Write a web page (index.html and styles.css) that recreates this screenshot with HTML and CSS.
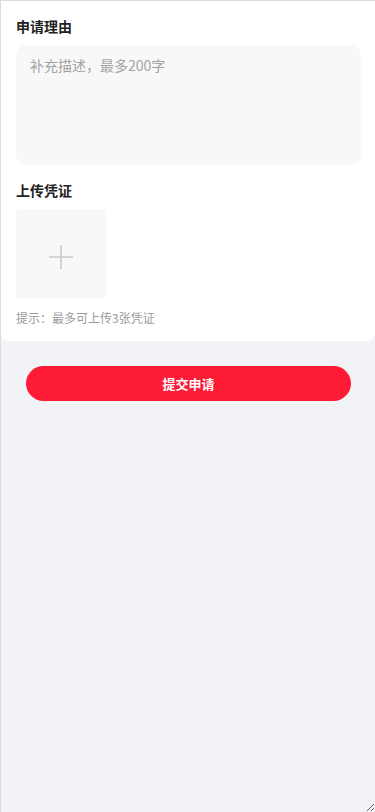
FILE: index.html
```html
<!DOCTYPE html>
<html lang="zh-CN">
<head>
<meta charset="utf-8">
<meta name="viewport" content="width=device-width, initial-scale=1">
<title>申请</title>
<link rel="stylesheet" href="styles.css">
</head>
<body>
<div class="frame">
  <section class="card">
    <h2 class="title">申请理由</h2>
    <div class="reason">
      <textarea class="reason-input" placeholder="补充描述，最多200字" maxlength="200"></textarea>
    </div>
    <h2 class="title title-upload">上传凭证</h2>
    <div class="uploader">
      <div class="upload-box">
        <svg class="plus" width="24" height="24" viewBox="0 0 24 24" aria-hidden="true">
          <path d="M12 0V24M0 12H24" stroke="#c8c9cc" stroke-width="1.6" fill="none"/>
        </svg>
      </div>
    </div>
    <p class="hint">提示：最多可上传3张凭证</p>
  </section>
  <div class="actions">
    <button class="submit" type="button">提交申请</button>
  </div>
</div>
</body>
</html>
```

FILE: styles.css
```css
* { box-sizing: border-box; }
html, body { margin: 0; padding: 0; }
body {
  font-family: "Noto Sans CJK SC", "Noto Sans", "Liberation Sans", sans-serif;
  background: #f2f3f7;
}
.frame {
  width: 375px;
  height: 812px;
  border-top: 1px solid #dcdcdc;
  border-left: 1px solid #dcdcdc;
  background: #f2f3f7;
  overflow: auto;
  resize: both;
}
.card {
  background: #ffffff;
  border-radius: 0 0 8px 8px;
  padding: 15px 14px 15px 15px;
}
.title {
  margin: 0;
  font-size: 14px;
  line-height: 20px;
  font-weight: 700;
  color: #222222;
}
.title-upload { margin-top: 15px; }
.reason {
  margin-top: 9px;
  height: 120px;
  background: #f8f8f8;
  border-radius: 10px;
  padding: 10px 14px;
}
.reason-input {
  display: block;
  width: 100%;
  height: 100%;
  border: none;
  outline: none;
  resize: none;
  background: transparent;
  padding: 0;
  margin: 0;
  font-family: inherit;
  font-size: 14px;
  line-height: 20px;
  color: #333;
}
.reason-input::placeholder { color: #a3a3a3; }
.uploader {
  margin-top: 9px;
  display: flex;
}
.upload-box {
  width: 90px;
  height: 90px;
  background: #f8f8f8;
  border-radius: 4px;
  display: flex;
  align-items: center;
  justify-content: center;
}
.plus { display: block; margin-top: 6px; }
.hint {
  margin: 10px 0 0;
  font-size: 12px;
  line-height: 17px;
  color: #9a9a9a;
}
.actions {
  padding: 25px 24px 0 25px;
}
.submit {
  display: block;
  width: 100%;
  height: 35px;
  border: none;
  border-radius: 18px;
  background: #fe1b35;
  color: #ffffff;
  font-family: inherit;
  font-size: 13px;
  font-weight: 700;
  padding: 0;
}
```
